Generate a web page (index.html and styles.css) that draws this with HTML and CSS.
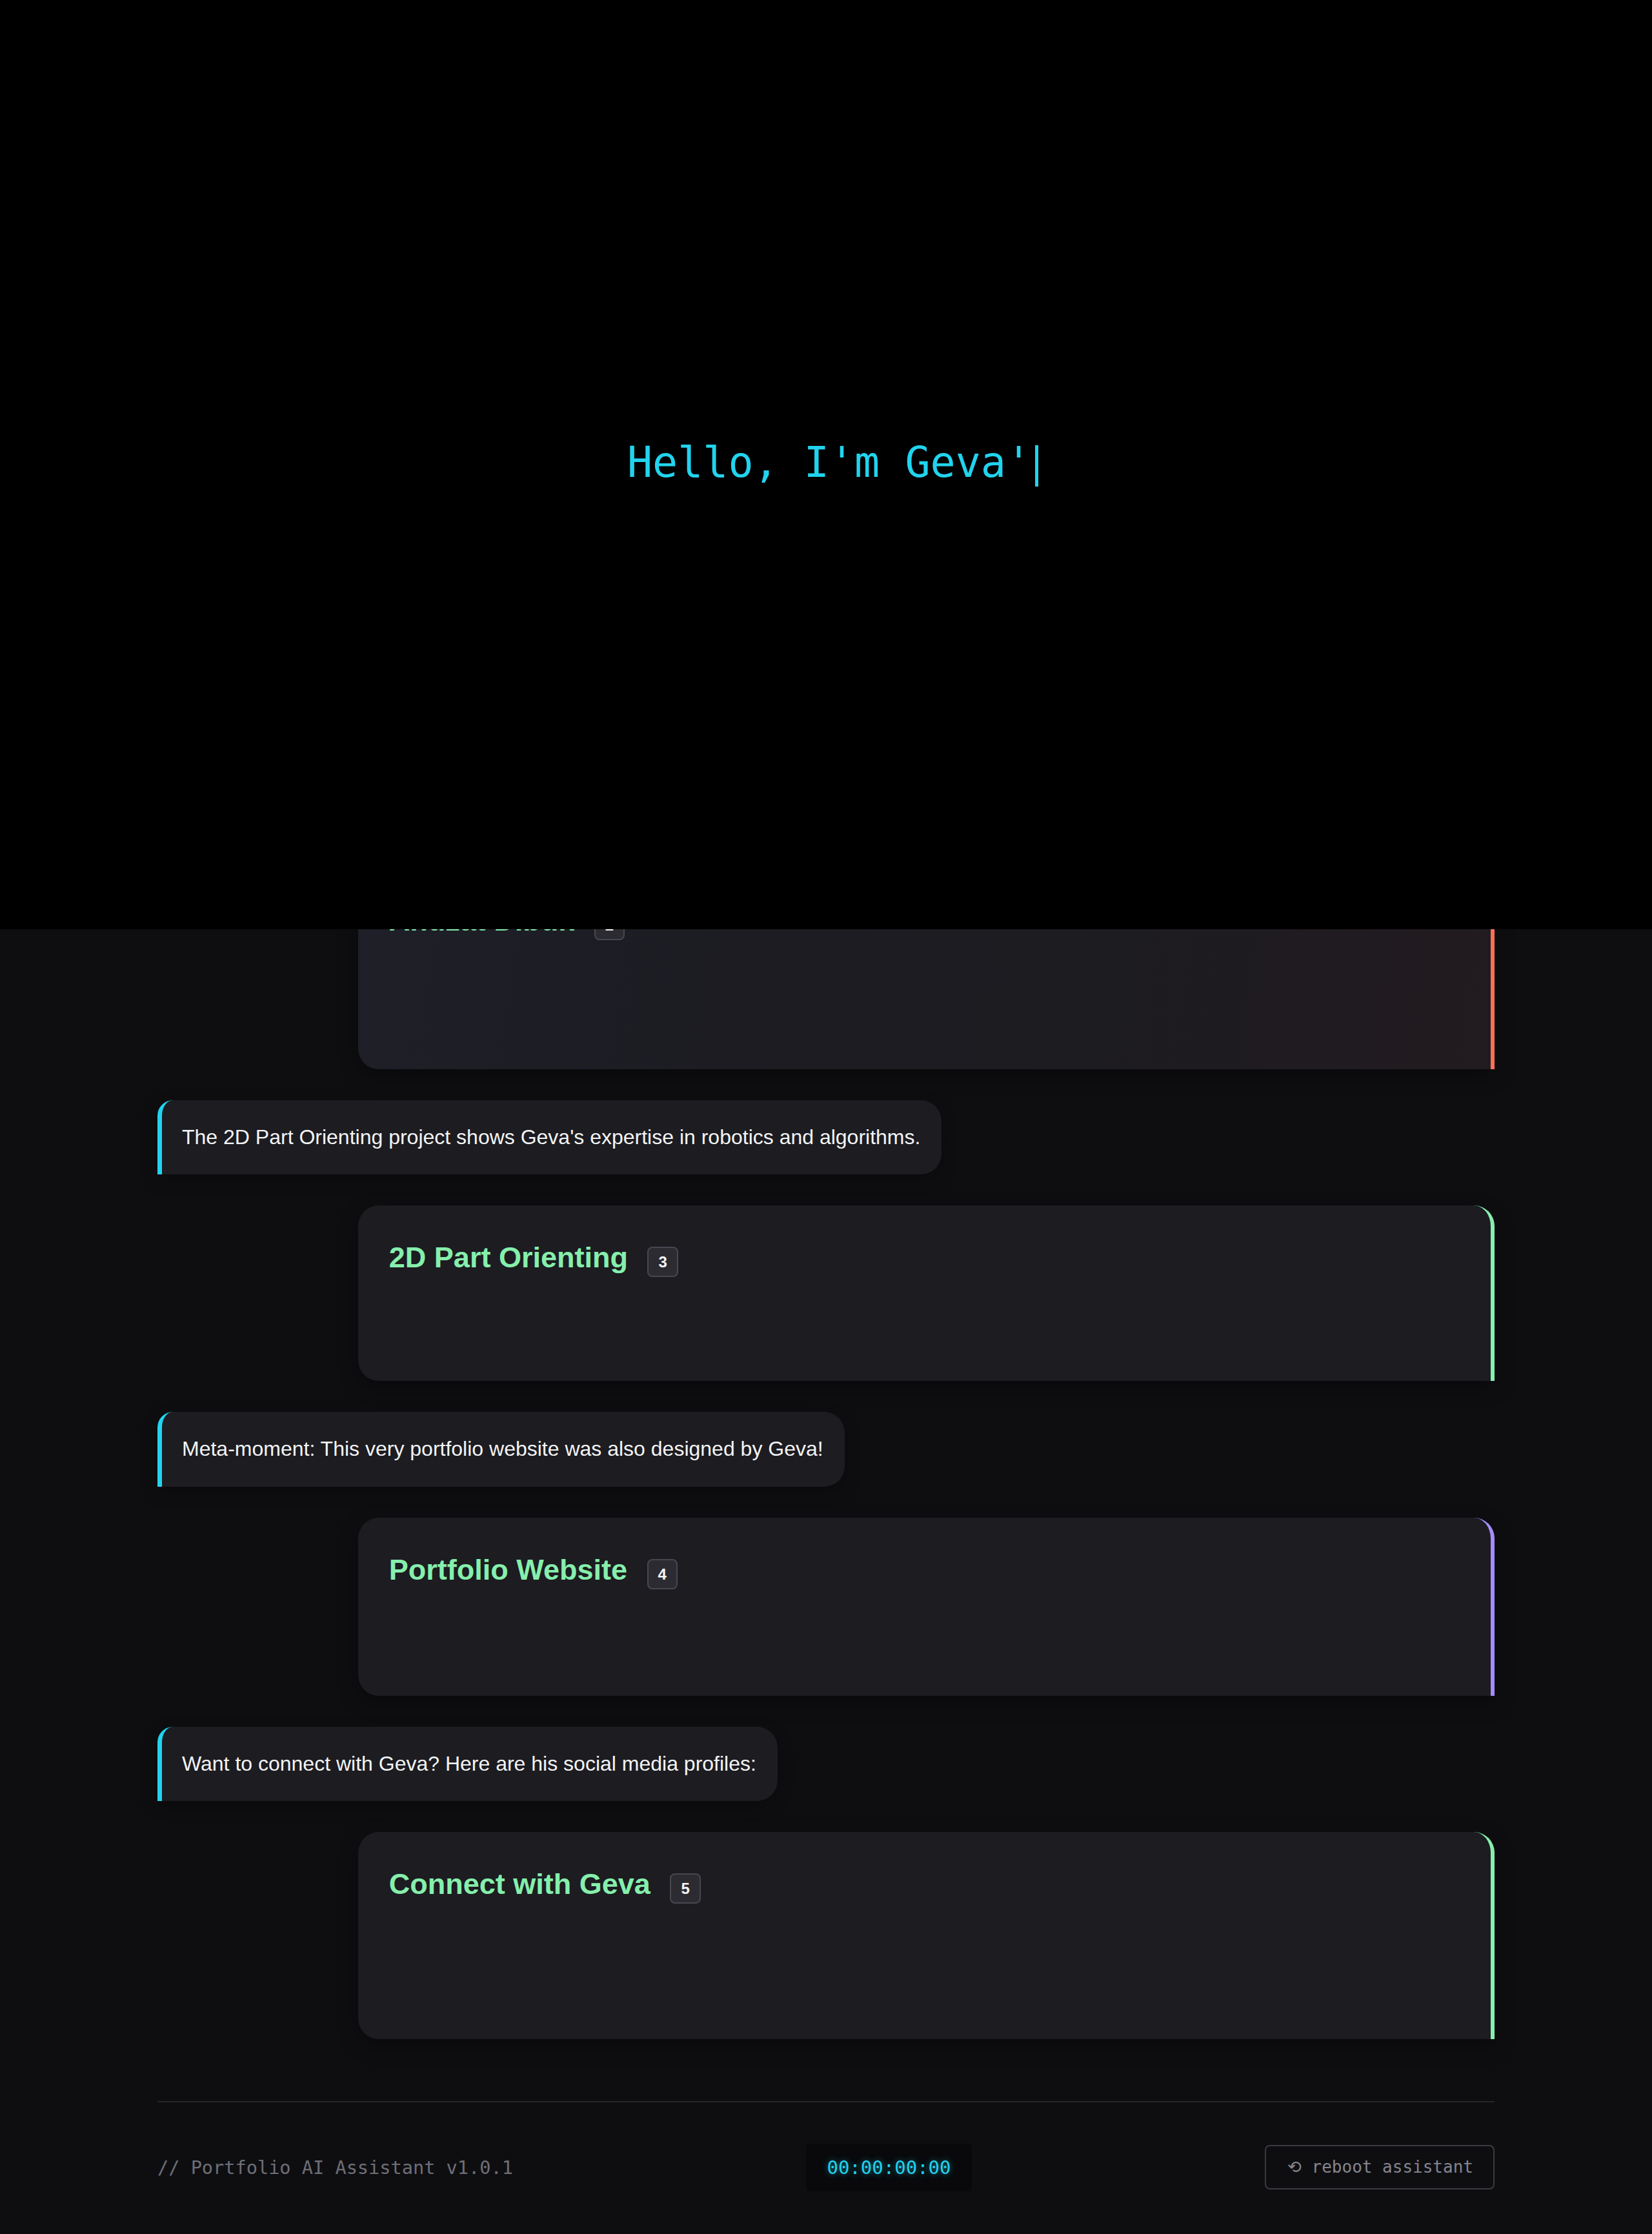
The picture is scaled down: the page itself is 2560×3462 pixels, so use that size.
FILE: index.html
```html
<!DOCTYPE html>
<html lang="en">
<head>
<meta charset="utf-8">
<title>Geva — Portfolio AI Assistant</title>
<link rel="stylesheet" href="styles.css">
</head>
<body>
<div class="page">
  <main class="container">
    <section class="chat">
      <div class="msg">Here are some of Geva's featured projects. Let's start with Ahuzat Dibuk.</div>
      <article class="card card--warm">
        <h3 class="card-title">Ahuzat Dibuk <span class="badge">2</span></h3>
        <div class="card-body card-body--l"></div>
      </article>

      <div class="msg">The 2D Part Orienting project shows Geva's expertise in robotics and algorithms.</div>
      <article class="card card--green">
        <h3 class="card-title">2D Part Orienting <span class="badge">3</span></h3>
        <div class="card-body card-body--s"></div>
      </article>

      <div class="msg">Meta-moment: This very portfolio website was also designed by Geva!</div>
      <article class="card card--violet">
        <h3 class="card-title">Portfolio Website <span class="badge">4</span></h3>
        <div class="card-body card-body--m"></div>
      </article>

      <div class="msg">Want to connect with Geva? Here are his social media profiles:</div>
      <article class="card card--green">
        <h3 class="card-title">Connect with Geva <span class="badge">5</span></h3>
        <div class="card-body card-body--xl"></div>
      </article>
    </section>

    <footer class="footer">
      <span class="footer-note">// Portfolio AI Assistant v1.0.1</span>
      <span class="timer">00:00:00:00</span>
      <button class="reboot" type="button"><span class="reboot-icon">⟲</span> reboot assistant</button>
    </footer>
  </main>

  <div class="intro">
    <div class="typing">Hello, I'm Geva'<span class="cursor"></span></div>
  </div>
</div>
</body>
</html>
```

FILE: styles.css
```css
html, body {
  margin: 0;
  padding: 0;
  background: #0e0e11;
}

body {
  font-family: "Liberation Sans", Arial, sans-serif;
  color: #f4f4f5;
}

.page {
  position: relative;
}

.container {
  max-width: 2072px;
  margin: 0 auto;
}

.chat {
  display: flex;
  flex-direction: column;
  align-items: flex-start;
  gap: 48px;
  padding-top: 1183px;
}

.msg {
  background: #1c1c21;
  border-left: 7px solid #22d3ee;
  border-radius: 24px 32px 32px 0;
  padding: 32px 33px 32px 31px;
  font-size: 32px;
  line-height: 1.6;
  color: #f4f4f5;
  max-width: 85%;
  box-shadow: 0 8px 24px rgba(0, 0, 0, 0.25);
}

.card {
  align-self: flex-end;
  width: 85%;
  box-sizing: border-box;
  background: #1c1c21;
  border-right: 6px solid #86efac;
  border-radius: 32px 32px 0 32px;
  padding: 48px;
  box-shadow: 0 10px 30px rgba(0, 0, 0, 0.35);
}

.card--warm {
  border-right-color: #f87156;
  background: linear-gradient(100deg, #1e1f28 0%, #1c1c22 35%, #1c1c21 60%, #221b20 100%);
}

.card--green {
  border-right-color: #86efac;
}

.card--violet {
  border-right-color: #a78bfa;
}

.card-title {
  margin: 0;
  font-size: 45px;
  line-height: 66px;
  font-weight: 700;
  color: #86efac;
}

.badge {
  display: inline-block;
  margin-left: 18px;
  min-width: 13px;
  padding: 7px 15px;
  line-height: 29px;
  font-size: 24px;
  font-weight: 700;
  color: #f4f4f5;
  background: #2b2b31;
  border: 2px solid #47474f;
  border-radius: 8px;
  text-align: center;
  vertical-align: baseline;
}

.card-body--s { height: 110px; }
.card-body--m { height: 114px; }
.card-body--l { height: 149px; }
.card-body--xl { height: 159px; }

.footer {
  margin-top: 96px;
  border-top: 2px solid #26262b;
  padding: 64px 0;
  display: flex;
  align-items: center;
  justify-content: space-between;
  font-family: "DejaVu Sans Mono", monospace;
}

.footer-note {
  font-size: 28.6px;
  color: #6e6e76;
}

.timer {
  font-size: 29px;
  line-height: 42px;
  padding: 16px 32px;
  background: #09090b;
  color: #22d3ee;
  border-radius: 6px;
  text-shadow: 0 0 10px rgba(34, 211, 238, 0.55);
}

.reboot {
  font-family: "DejaVu Sans Mono", monospace;
  font-size: 26px;
  line-height: 39px;
  padding: 13px 31px 13px 33px;
  background: transparent;
  color: #85858e;
  border: 2px solid #3a3a41;
  border-radius: 8px;
}

.reboot-icon {
  font-family: "DejaVu Sans", sans-serif;
}

.intro {
  position: absolute;
  top: 0;
  left: 0;
  right: 0;
  height: 1440px;
  background: #000;
  display: flex;
  align-items: center;
  justify-content: center;
}

.typing {
  font-family: "DejaVu Sans Mono", monospace;
  font-size: 65px;
  color: #22d3ee;
  display: flex;
  align-items: center;
  padding-left: 21px;
  margin-top: -8px;
}

.cursor {
  display: inline-block;
  width: 5px;
  height: 64px;
  margin-left: 6px;
  margin-top: 12px;
  background: #22d3ee;
}
```
